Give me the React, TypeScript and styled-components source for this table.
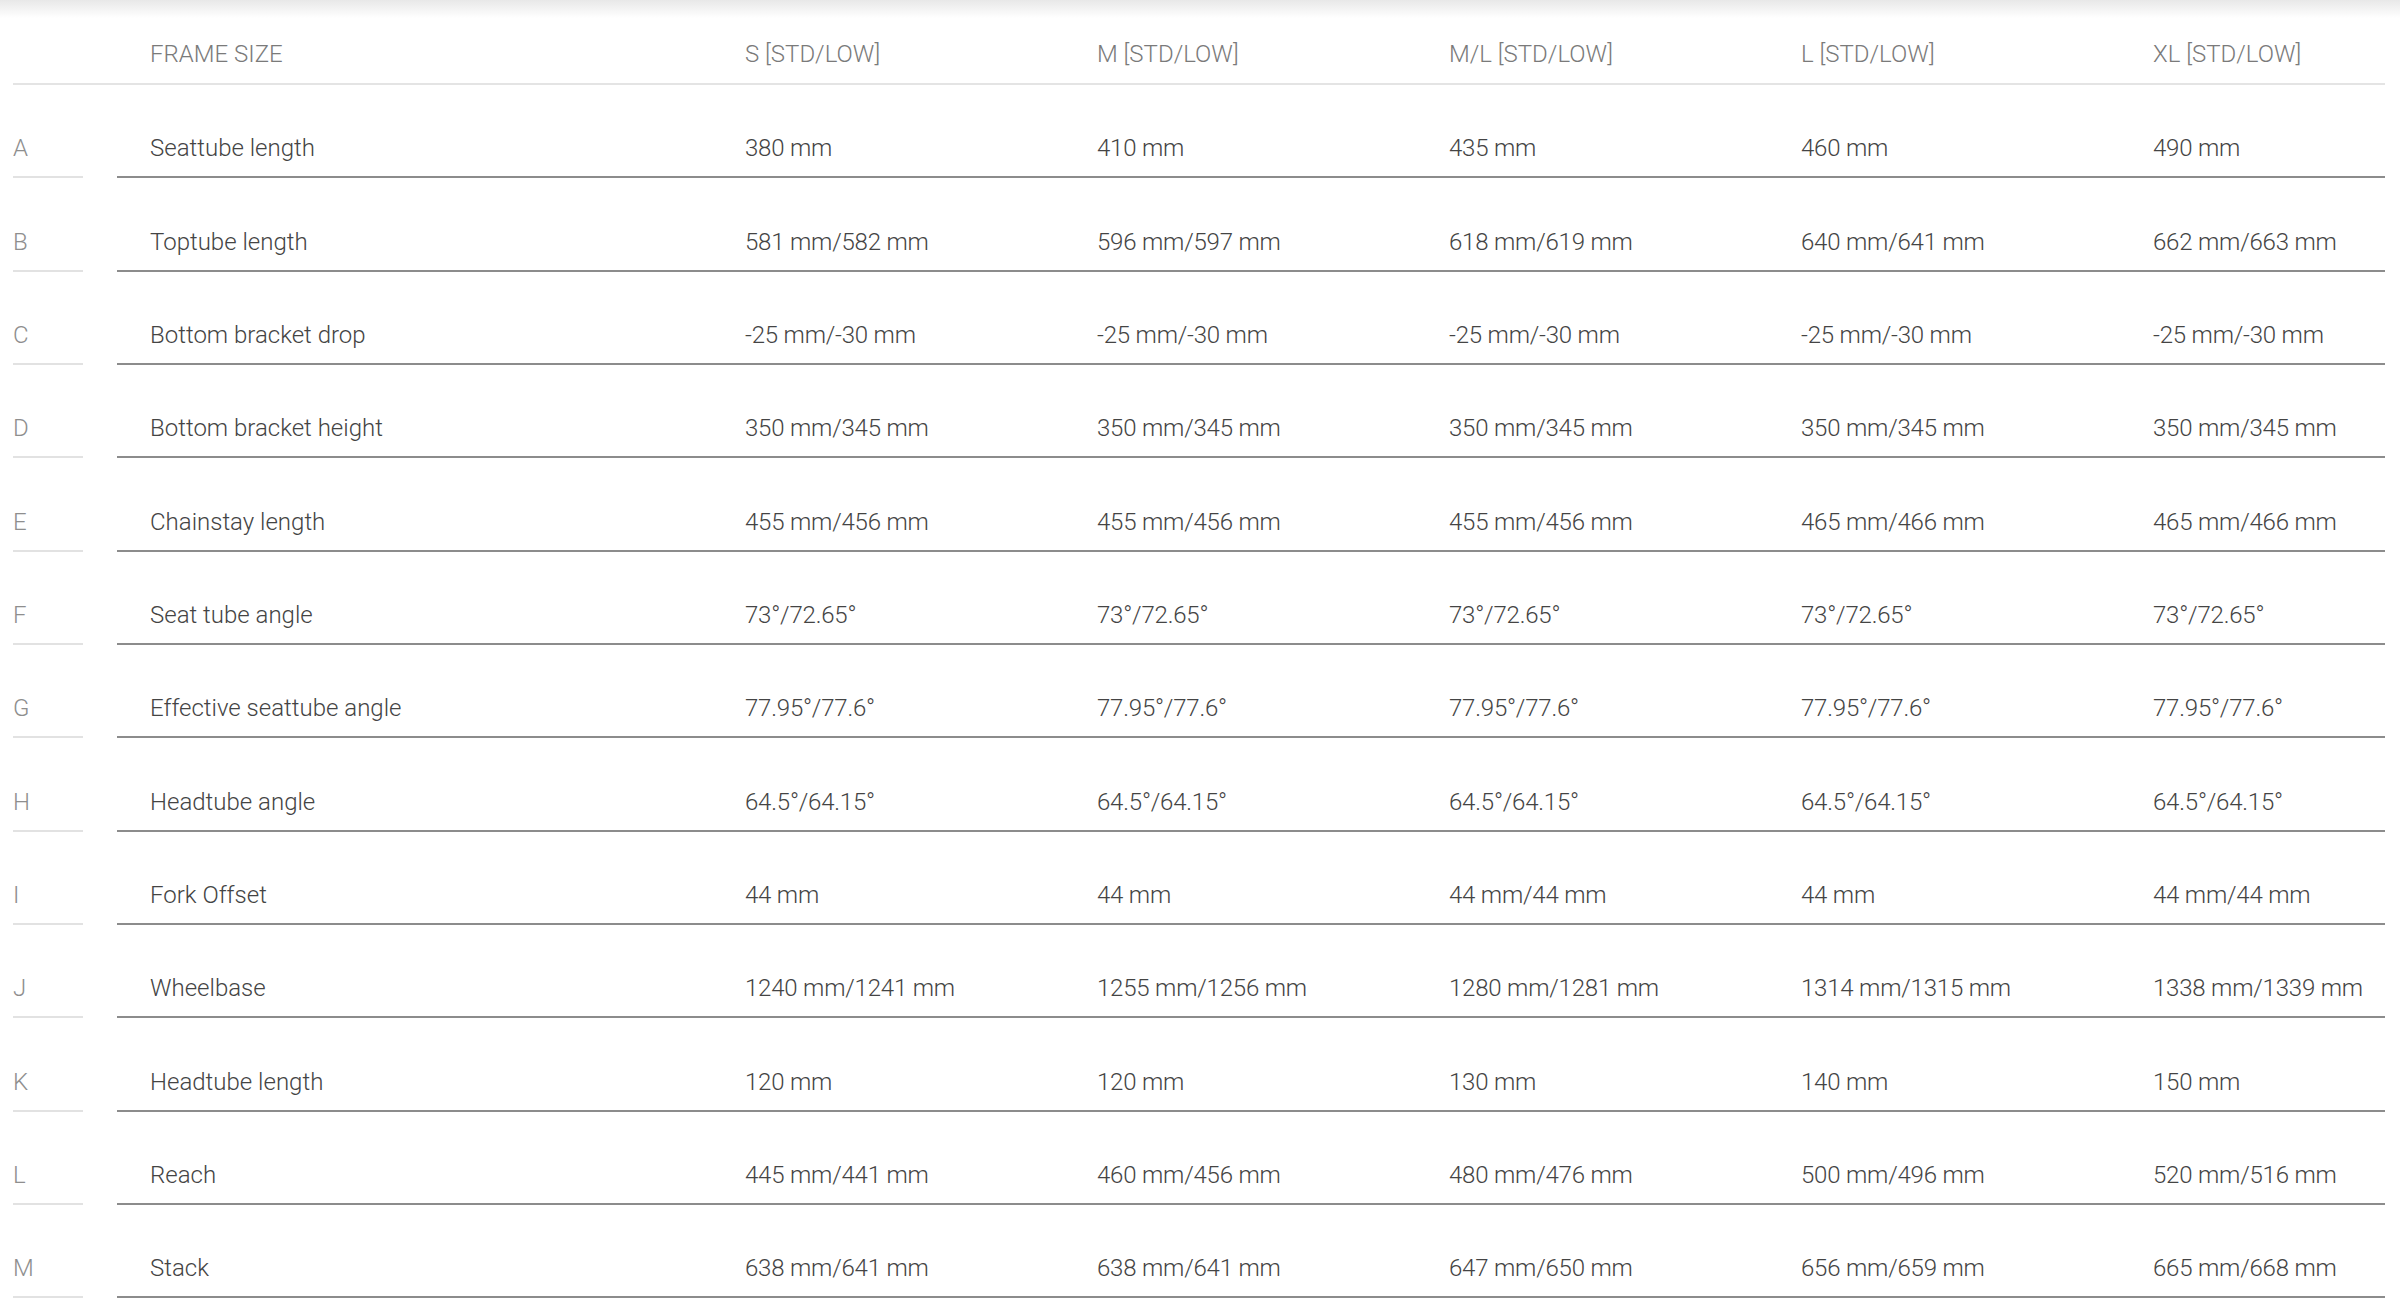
import React from "react";
import styled, { createGlobalStyle } from "styled-components";

const GlobalStyle = createGlobalStyle`
  html, body {
    margin: 0;
    padding: 0;
    background: #fff;
  }
  body {
    font-family: Roboto, "Liberation Sans", sans-serif;
  }
`;

type Row = {
  letter: string;
  name: string;
  values: string[];
};

const sizes = ["S [STD/LOW]", "M [STD/LOW]", "M/L [STD/LOW]", "L [STD/LOW]", "XL [STD/LOW]"];

const rows: Row[] = [
  { letter: "A", name: "Seattube length", values: ["380 mm", "410 mm", "435 mm", "460 mm", "490 mm"] },
  { letter: "B", name: "Toptube length", values: ["581 mm/582 mm", "596 mm/597 mm", "618 mm/619 mm", "640 mm/641 mm", "662 mm/663 mm"] },
  { letter: "C", name: "Bottom bracket drop", values: ["-25 mm/-30 mm", "-25 mm/-30 mm", "-25 mm/-30 mm", "-25 mm/-30 mm", "-25 mm/-30 mm"] },
  { letter: "D", name: "Bottom bracket height", values: ["350 mm/345 mm", "350 mm/345 mm", "350 mm/345 mm", "350 mm/345 mm", "350 mm/345 mm"] },
  { letter: "E", name: "Chainstay length", values: ["455 mm/456 mm", "455 mm/456 mm", "455 mm/456 mm", "465 mm/466 mm", "465 mm/466 mm"] },
  { letter: "F", name: "Seat tube angle", values: ["73°/72.65°", "73°/72.65°", "73°/72.65°", "73°/72.65°", "73°/72.65°"] },
  { letter: "G", name: "Effective seattube angle", values: ["77.95°/77.6°", "77.95°/77.6°", "77.95°/77.6°", "77.95°/77.6°", "77.95°/77.6°"] },
  { letter: "H", name: "Headtube angle", values: ["64.5°/64.15°", "64.5°/64.15°", "64.5°/64.15°", "64.5°/64.15°", "64.5°/64.15°"] },
  { letter: "I", name: "Fork Offset", values: ["44 mm", "44 mm", "44 mm/44 mm", "44 mm", "44 mm/44 mm"] },
  { letter: "J", name: "Wheelbase", values: ["1240 mm/1241 mm", "1255 mm/1256 mm", "1280 mm/1281 mm", "1314 mm/1315 mm", "1338 mm/1339 mm"] },
  { letter: "K", name: "Headtube length", values: ["120 mm", "120 mm", "130 mm", "140 mm", "150 mm"] },
  { letter: "L", name: "Reach", values: ["445 mm/441 mm", "460 mm/456 mm", "480 mm/476 mm", "500 mm/496 mm", "520 mm/516 mm"] },
  { letter: "M", name: "Stack", values: ["638 mm/641 mm", "638 mm/641 mm", "647 mm/650 mm", "656 mm/659 mm", "665 mm/668 mm"] },
];

export default function App() {
  return (
    <Page>
      <GlobalStyle />
      <Table>
        <HeaderRow>
          <span />
          <DataGrid>
            <HeadCell $first>FRAME SIZE</HeadCell>
            {sizes.map((s) => (
              <HeadCell key={s}>{s}</HeadCell>
            ))}
          </DataGrid>
        </HeaderRow>
        {rows.map((r) => (
          <BodyRow key={r.letter}>
            <LetterCell>{r.letter}</LetterCell>
            <DataGrid $lined>
              <NameCell>{r.name}</NameCell>
              {r.values.map((v, i) => (
                <ValueCell key={i}>{v}</ValueCell>
              ))}
            </DataGrid>
          </BodyRow>
        ))}
      </Table>
    </Page>
  );
}

const Page = styled.div`
  height: 1303px;
  overflow: hidden;
  background: linear-gradient(to bottom, #e8e8e8 0, rgba(255, 255, 255, 0) 18px) no-repeat, #fff;
  padding: 0 15px 0 13px;
  box-sizing: border-box;
`;

const Table = styled.div`
  display: flex;
  flex-direction: column;
`;

const HeaderRow = styled.div`
  display: grid;
  grid-template-columns: 70px 1fr;
  column-gap: 34px;
  height: 85px;
  box-sizing: border-box;
  border-bottom: 2px solid #e4e4e4;
`;

const BodyRow = styled.div`
  display: grid;
  grid-template-columns: 70px 1fr;
  column-gap: 34px;
  height: 93.33px;
`;

const DataGrid = styled.div<{ $lined?: boolean }>`
  display: grid;
  grid-template-columns: 628px repeat(4, 352px) 1fr;
  align-items: end;
  box-sizing: border-box;
  border-bottom: ${(p) => (p.$lined ? "2px solid #8c8c8c" : "none")};
`;

const Text = styled.div`
  font-size: 24px;
  line-height: 24px;
  font-weight: 300;
  padding-bottom: 16px;
  white-space: nowrap;
`;

const HeadCell = styled(Text)<{ $first?: boolean }>`
  color: #7a7a7a;
  padding-bottom: 17px;
  padding-left: ${(p) => (p.$first ? "33px" : "0")};
`;

const LetterCell = styled(Text)`
  color: #8e8e8e;
  box-sizing: border-box;
  height: 100%;
  display: flex;
  align-items: flex-end;
  border-bottom: 2px solid #e2e2e2;
`;

const NameCell = styled(Text)`
  color: #444;
  padding-left: 33px;
`;

const ValueCell = styled(Text)`
  color: #444;
  letter-spacing: -0.2px;
`;
